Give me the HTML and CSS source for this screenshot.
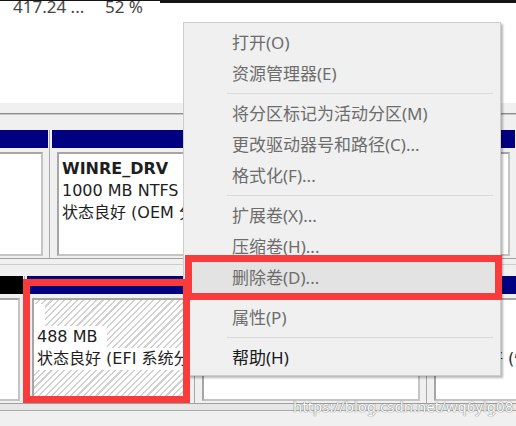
FILE: index.html
```html
<!DOCTYPE html>
<html>
  <head>
    <link rel="stylesheet" href="styles.css">
  </head>
  <body>
    <div class="topbar"></div>

    <div class="volumes">
      <div class="vol-row">
        <span class="cap">417.24 ...</span>
        <span class="pct">52 %</span>
      </div>
    </div>

    <div class="splitter"><div class="rule"></div></div>

    <!-- disk 0 -->
    <div class="disk disk-0">
      <div class="part part-a">
        <div class="head"></div>
        <div class="body"><div class="box"></div></div>
      </div>
      <div class="part part-b">
        <div class="head"></div>
        <div class="body">
          <div class="box">
            <div class="line name">WINRE_DRV</div>
            <div class="line">1000 MB NTFS</div>
            <div class="line">状态良好 (OEM 分区)</div>
          </div>
        </div>
      </div>
    </div>

    <div class="disk-gap"></div>

    <!-- disk 1 -->
    <div class="disk disk-1">
      <div class="part part-c">
        <div class="head unalloc"></div>
        <div class="body"><div class="box"></div></div>
      </div>
      <div class="part part-efi">
        <div class="head"></div>
        <div class="body">
          <div class="box hatched">
            <div class="line empty">&nbsp;</div>
            <div class="line">488 MB</div>
            <div class="line">状态良好 (EFI 系统分区)</div>
          </div>
        </div>
      </div>
      <div class="part part-sys">
        <div class="head"></div>
        <div class="body"><div class="box"></div></div>
      </div>
      <div class="part part-rec">
        <div class="head"></div>
        <div class="body">
          <div class="box">
            <div class="line">&nbsp;</div>
            <div class="line">980 MB</div>
            <div class="line">状态良好 (恢复分区)</div>
          </div>
        </div>
      </div>
    </div>

    <div class="bottom"></div>

    <!-- context menu -->
    <div class="menu">
      <div class="item">打开(O)</div>
      <div class="item">资源管理器(E)</div>
      <div class="sep"></div>
      <div class="item">将分区标记为活动分区(M)</div>
      <div class="item">更改驱动器号和路径(C)...</div>
      <div class="item">格式化(F)...</div>
      <div class="sep"></div>
      <div class="item">扩展卷(X)...</div>
      <div class="item">压缩卷(H)...</div>
      <div class="item active">删除卷(D)...</div>
      <div class="sep"></div>
      <div class="item">属性(P)</div>
      <div class="sep"></div>
      <div class="item enabled">帮助(H)</div>
    </div>

    <div class="mark mark-delete"></div>
    <div class="mark mark-efi"></div>

    <div class="watermark">https://blog.csdn.net/wq6ylg08</div>
  </body>
</html>
```

FILE: styles.css
```css
* {
  box-sizing: border-box;
}

body {
  margin: 0;
  width: 516px;
  height: 426px;
  overflow: hidden;
  position: relative;
  background: #fff;
  color: #1e1e1e;
  font-family: "Noto Sans", "Noto Sans CJK SC", sans-serif;
  font-size: 17px;
}

.topbar {
  height: 3px;
  position: relative;
  z-index: 1;
  background:
    linear-gradient(#141414, #141414) 0 0 / 160px 1px no-repeat,
    linear-gradient(#141414, #141414) 160px 0 / 100% 3px no-repeat;
}

/* volume list (upper pane) */
.volumes {
  height: 100px;
  display: flex;
  flex-direction: column;
}

.vol-row {
  display: flex;
  margin-top: -5px;
  line-height: 17px;
  color: #454545;
  white-space: nowrap;
}

.vol-row .cap {
  width: 105px;
  padding-left: 13px;
}

.splitter {
  height: 25px;
  padding-top: 10px;
  background: #f0f0f0;
}

.splitter .rule {
  height: 2px;
  background: #8e8e8e;
  border-bottom: 1px solid #c4c4c4;
}

/* graphical disk view */
.disk {
  display: flex;
  padding-top: 2px;
  background: #f0f0f0;
  border-bottom: 1px solid #a0a0a0;
  overflow: hidden;
}

.disk-0 {
  height: 131px;
}

.disk-1 {
  height: 130px;
}

.part {
  display: flex;
  flex-direction: column;
  flex: none;
}

.part + .part {
  margin-left: 1px;
  border-left: 1px solid #a8a8a8;
  padding-left: 2px;
}

.head {
  height: 18px;
  background: #000080;
}

.head.unalloc {
  background: #000;
}

.body {
  flex: 1;
  min-height: 0;
  padding: 4px 5px 2px;
}

.box {
  height: 100%;
  padding: 4px 3px;
  background: #fff;
  border: 2px solid;
  border-color: #a6a6a6 #c4c4c4 #c4c4c4 #a6a6a6;
  font-family: "DejaVu Sans", "Noto Sans CJK SC", sans-serif;
  font-size: 16px;
  line-height: 22px;
  white-space: nowrap;
  overflow: hidden;
}

.line.name {
  font-weight: bold;
}

.part-a {
  width: 68px;
  margin-left: -20px;
}

.part-b {
  width: 466px;
}

.part-c {
  width: 43px;
  margin-left: -20px;
}

.part-c .body {
  padding-right: 3px;
}

.part-efi {
  width: 169px;
}

.part-sys {
  width: 231px;
}

.part-rec {
  width: 150px;
}

/* selected partition */
.box.hatched {
  padding-left: 0;
  background: repeating-linear-gradient(135deg, #fff 0 3px, #d2d2d2 3px 4.5px);
}

.hatched .line {
  width: fit-content;
  padding: 0 10px 0 3px;
  background: #fff;
}

.hatched .line.empty {
  padding-right: 3px;
}

.disk-gap {
  height: 15px;
  background: linear-gradient(#f0f0f0 5px, #cdcdcd 5px 6px, #f0f0f0 6px);
}

.bottom {
  height: 22px;
  background: linear-gradient(#e6e6e6 6px, #a9a9a9 6px 7px, #f0f0f0 7px);
}

/* context menu */
.menu {
  position: absolute;
  left: 183px;
  top: 22px;
  width: 318px;
  padding: 4px 2px 2px;
  background: #f0f0f0;
  border: 1px solid #cdcdcd;
  box-shadow: 2px 2px 2px rgba(0, 0, 0, 0.28);
  z-index: 2;
}

.menu .item {
  height: 31px;
  line-height: 31px;
  padding-left: 46px;
  color: #6d6d6d;
  white-space: nowrap;
}

.menu .item.active {
  background: #e3e3e3;
}

.menu .item.enabled {
  color: #1a1a1a;
}

.menu .sep {
  height: 9px;
  padding: 4px 5px 0 41px;
}

.menu .sep::before {
  content: "";
  display: block;
  height: 1px;
  background: #d8d8d8;
}

/* red highlight boxes */
.mark {
  position: absolute;
  border: 7px solid #f93b3b;
  z-index: 3;
}

.mark-delete {
  left: 185px;
  top: 255px;
  width: 317px;
  height: 45px;
}

.mark-efi {
  left: 23px;
  top: 279px;
  width: 167px;
  height: 124px;
}

.watermark {
  position: absolute;
  left: 293px;
  top: 397px;
  font-size: 15px;
  line-height: 18px;
  color: #fff;
  text-shadow: 0 0 1px #6f6f6f, 0 0 1px #6f6f6f;
  white-space: nowrap;
  z-index: 3;
}
```
